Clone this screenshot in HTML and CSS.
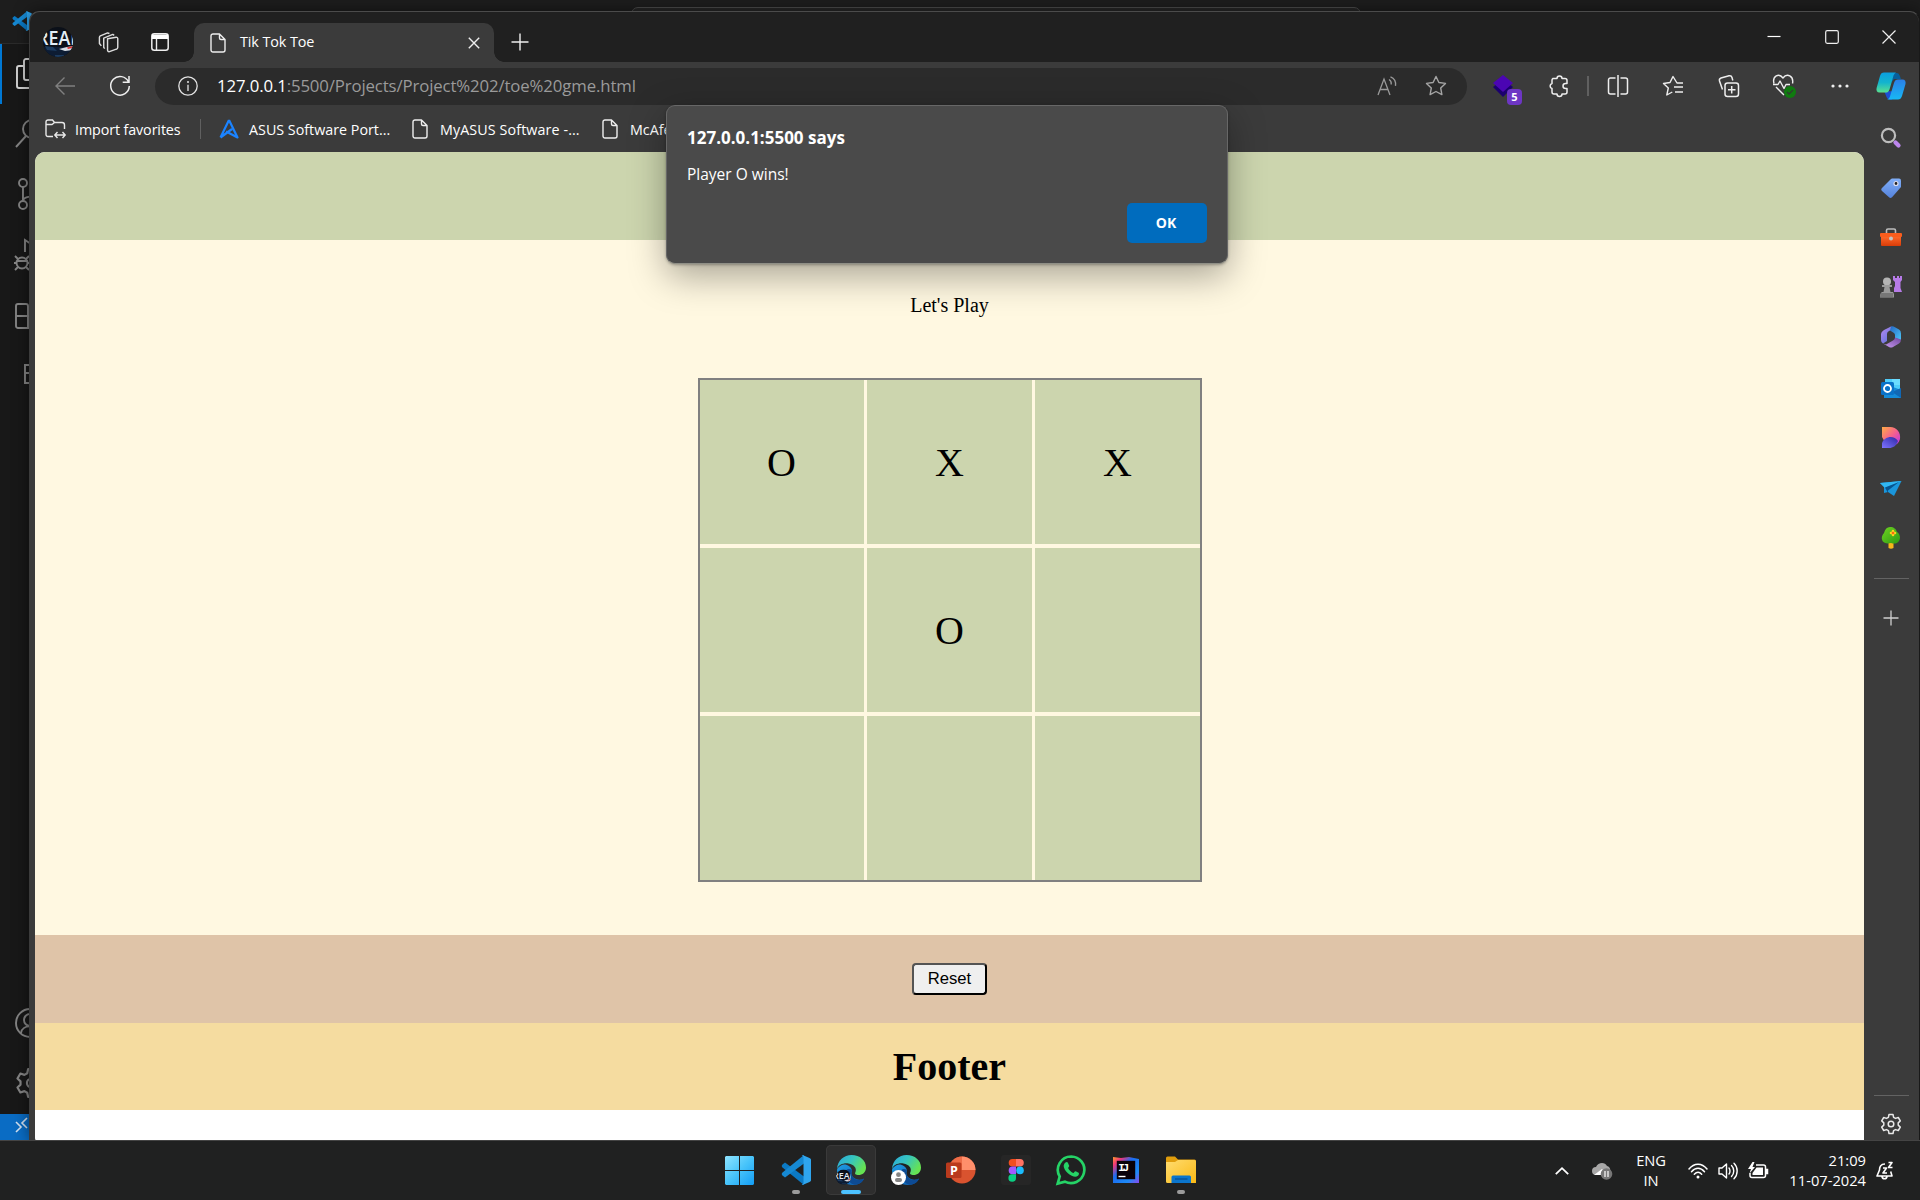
FILE: index.html
```html
<!DOCTYPE html>
<html lang="en">
<head>
<meta charset="utf-8">
<title>Tik Tok Toe</title>
<link rel="stylesheet" href="styles.css">
</head>
<body>
<svg class="defs" width="0" height="0" aria-hidden="true">
  <defs>
    <linearGradient id="gEdgeTop" x1="0" y1="0" x2="1" y2=".5"><stop offset="0" stop-color="#2aa7dc"/><stop offset=".5" stop-color="#36c5c0"/><stop offset="1" stop-color="#66e352"/></linearGradient>
    <linearGradient id="gEdgeLow" x1="0" y1="0" x2="1" y2="1"><stop offset="0" stop-color="#1f9ee6"/><stop offset="1" stop-color="#0c56a8"/></linearGradient>
    <linearGradient id="gWin" x1="0" y1="0" x2="1" y2="1"><stop offset="0" stop-color="#8fe4ff"/><stop offset=".5" stop-color="#48c4fa"/><stop offset="1" stop-color="#139df5"/></linearGradient>
    <linearGradient id="gCopA" x1="0" y1="0" x2="0" y2="1"><stop offset="0" stop-color="#0a9fe0"/><stop offset=".5" stop-color="#13b4ce"/><stop offset="1" stop-color="#5ae08f"/></linearGradient>
    <linearGradient id="gCopB" x1="0" y1="0" x2="0" y2="1"><stop offset="0" stop-color="#2b7fe8"/><stop offset="1" stop-color="#17b8f5"/></linearGradient>
    <linearGradient id="gRed" x1="0" y1="0" x2="0" y2="1"><stop offset="0" stop-color="#ff6b2b"/><stop offset="1" stop-color="#d93c08"/></linearGradient>
    <linearGradient id="gTag" x1="0" y1="0" x2="0" y2="1"><stop offset="0" stop-color="#80aef8"/><stop offset="1" stop-color="#5583dc"/></linearGradient>
    <linearGradient id="gM1" x1="0" y1="0" x2="1" y2="1"><stop offset="0" stop-color="#b98af0"/><stop offset="1" stop-color="#4b6ed8"/></linearGradient>
    <linearGradient id="gM2" x1="0" y1="0" x2="1" y2="1"><stop offset="0" stop-color="#2468c4"/><stop offset="1" stop-color="#4cc6f6"/></linearGradient>
    <linearGradient id="gM3" x1="0" y1="1" x2="1" y2="0"><stop offset="0" stop-color="#c99af2"/><stop offset="1" stop-color="#71479f"/></linearGradient>
    <linearGradient id="gD1" x1="0" y1="0" x2="1" y2="1"><stop offset="0" stop-color="#ffab45"/><stop offset=".5" stop-color="#f5608e"/><stop offset="1" stop-color="#b22ff0"/></linearGradient>
    <linearGradient id="gD2" x1="0" y1="1" x2="1" y2="0"><stop offset="0" stop-color="#7e74ff"/><stop offset="1" stop-color="#2d27a5"/></linearGradient>
    <linearGradient id="gFold" x1="0" y1="0" x2="1" y2="1"><stop offset="0" stop-color="#ffdc70"/><stop offset="1" stop-color="#fab914"/></linearGradient>
    <linearGradient id="gIJ" x1="0" y1="0" x2="1" y2="1"><stop offset="0" stop-color="#ff9a2c"/><stop offset=".18" stop-color="#f2357a"/><stop offset=".4" stop-color="#1c6cf0"/><stop offset=".75" stop-color="#1d8af5"/><stop offset="1" stop-color="#8a48ee"/></linearGradient>
    <linearGradient id="gTree" x1="0" y1="0" x2="1" y2="1"><stop offset="0" stop-color="#6fd420"/><stop offset="1" stop-color="#2c9a14"/></linearGradient>
    <symbol id="doc" viewBox="0 0 16 20"><path d="M3 1h6.500L15 6.500V17a2 2 0 0 1-2 2H3a2 2 0 0 1-2-2V3a2 2 0 0 1 2-2zM9.500 1v4a1.500 1.500 0 0 0 1.500 1.500h4" fill="none" stroke="#eee" stroke-width="1.400" stroke-linejoin="round"/></symbol>
    <symbol id="edge" viewBox="0 0 30 30">
      <path d="M1 15C1 25 9 30 17 30C23 30 27 26.500 28 23.500C26 25 22.500 25 20 24C16 22.500 14.500 18.500 16 15.500C15 11 9 8 5 10.500C2.500 12 1 13.500 1 15z" fill="url(#gEdgeLow)"/>
      <path d="M10 16C9 23 14 29.500 19 29.700C23.500 29.500 27 26.500 28 23.500C24 26 19 25 17 22C15 19.500 15 17 16 15C13 13 10.500 14 10 16z" fill="#0d4b94"/>
      <path d="M1 14C1.500 5.500 8 0 15.500 0C24 0 30 5.500 30 12.500C30 18 25.500 20.500 21.500 20C19 19.600 18.500 18.500 19.500 17C21 13 18 9.500 12.500 8.500C7 7.800 2.500 10 1 14z" fill="url(#gEdgeTop)"/>
    </symbol>
    <symbol id="vscode" viewBox="0 0 30 30">
      <path d="M1.500 9.500L4 7.500L23 21.500V30L1.500 12.500C.5 11.500 .5 10.500 1.500 9.500z" fill="#0b79c4"/>
      <path d="M1.500 20.500L4 22.500L23 8.500V0L1.500 17.500C.5 18.500 .5 19.500 1.500 20.500z" fill="#1689d3"/>
      <path d="M21.500 0L28.500 3C29.500 3.500 30 4 30 5V25C30 26 29.500 26.500 28.500 27L21.500 30L20.500 29C21.500 29.500 22.500 29 22.500 27.500V2.500C22.500 1 21.500 .5 20.500 1z" fill="#2fa5ee"/>
    </symbol>
    <symbol id="gear" viewBox="0 0 22 22"><path d="M9 1.500h4l.6 2.800 1.900 1.100 2.800-.9 2 3.400-2.100 2v2.200l2.100 2-2 3.400-2.800-.9-1.900 1.100-.6 2.800H9l-.6-2.800-1.900-1.100-2.800.9-2-3.400 2.100-2V9.900l-2.100-2 2-3.400 2.800.9 1.900-1.100z" fill="none" stroke="currentColor" stroke-width="1.500" stroke-linejoin="round"/><circle cx="11" cy="11" r="2.800" fill="none" stroke="currentColor" stroke-width="1.500"/></symbol>
    <symbol id="avatar" viewBox="0 0 30 30">
      <clipPath id="avClip"><circle cx="15" cy="15" r="15"/></clipPath>
      <g clip-path="url(#avClip)"><rect width="30" height="30" fill="#0b1019"/><path d="M0 20h30v10H0z" fill="#0d1c33"/>
      <text x="-6" y="18" font-family="Open Sans, sans-serif" font-weight="600" font-size="19" fill="#e2edf5" textLength="43" lengthAdjust="spacingAndGlyphs">REAL</text>
      <path d="M16 22l8-2 6-1v4l-8 1z" fill="#d9dfe6"/><path d="M24 20.500l6-1.500v1.700l-5 1.300z" fill="#d33"/><path d="M2 19l8 1 4 4-10-1zM12 28h9v2h-9z" fill="#1b3a5e"/></g>
    </symbol>
  </defs>
</svg>

<main class="desktop">
  <section class="code-window">
    <div class="code-title"><svg class="code-logo" width="20" height="20"><use href="#vscode"/></svg></div>
    <div class="command-box"></div>
    <div class="activity">
      <div class="act act-active"><svg width="30" height="32" viewBox="0 0 30 32"><path d="M9 8H4a2 2 0 0 0-2 2v18a2 2 0 0 0 2 2h17M11 1h11l6 6v13a2 2 0 0 1-2 2H11a2 2 0 0 1-2-2V3a2 2 0 0 1 2-2z"/></svg></div>
      <div class="act"><svg width="30" height="30" viewBox="0 0 30 30"><circle cx="17" cy="10" r="9"/><path d="M11 17L1 28"/></svg></div>
      <div class="act"><svg width="30" height="32" viewBox="0 0 30 32"><circle cx="8" cy="5" r="4"/><circle cx="8" cy="27" r="4"/><circle cx="22" cy="12" r="4"/><path d="M8 9v14M8 23c0-6 12-3 13-7"/></svg></div>
      <div class="act act-run"><svg width="30" height="32" viewBox="0 0 30 32"><path d="M10 13V1l18 12-8 6"/><circle cx="7" cy="24" r="5.500"/><path d="M2 22h11M0 17l3 3M14 17l-3 3M-1 24h3M12 24h3M0 31l3-3M14 31l-3-3"/></svg></div>
      <div class="act act-ext"><svg width="30" height="30" viewBox="0 0 30 30"><path d="M3 2h8a2 2 0 0 1 2 2v22H3a2 2 0 0 1-2-2V4a2 2 0 0 1 2-2zM1 14h24v10a2 2 0 0 1-2 2H13"/></svg></div>
      <div class="act"><svg width="30" height="30" viewBox="0 0 30 30"><path d="M25 6H10v18h15M10 14h14"/></svg></div>
      <div class="act-gap"></div>
      <div class="act act-user"><svg width="30" height="30" viewBox="0 0 30 30"><circle cx="15" cy="15" r="14"/><circle cx="15" cy="12" r="6"/><path d="M6 25c1-9 17-9 18 0"/></svg></div>
      <div class="act"><svg width="32" height="32" viewBox="0 0 22 22"><use href="#gear"/></svg></div>
    </div>
    <div class="remote"><svg width="14" height="16" viewBox="0 0 14 16"><path d="M1 5l5 5-5 5M12 1L7 6l5 5" fill="none" stroke="#d5e3f2" stroke-width="1.600"/></svg></div>
  </section>

  <section class="browser">
    <header class="tabstrip">
      <span class="cell profile"><svg width="30" height="30"><use href="#avatar"/></svg></span>
      <span class="cell spaces"><svg width="21" height="21" viewBox="0 0 22 22" fill="none" stroke="#ddd" stroke-width="1.500" stroke-linejoin="round"><path d="M10 7l9-1.500a1.500 1.500 0 0 1 1.700 1.300v9.500a1.800 1.800 0 0 1-1.500 1.700L12 20.500a1.500 1.500 0 0 1-2-1.500zM7 17.500L6 16V6.500L15.500 2.500l1.500 1M3.500 14.500L1.500 12V5.500a2 2 0 0 1 1-1.500L10 1l2 .5"/></svg></span>
      <span class="cell vtabs"><svg width="18" height="18" viewBox="0 0 18 18"><rect x=".8" y=".8" width="16.400" height="16.400" rx="2.500" fill="none" stroke="#eee" stroke-width="1.500"/><path d="M1 1.500h16V6H1z" fill="#fff"/><path d="M5.500 6v11" stroke="#eee" stroke-width="1.400"/></svg></span>
      <div class="tab">
        <svg width="16" height="20"><use href="#doc"/></svg>
        <span class="tab-title">Tik Tok Toe</span>
        <svg class="tab-close" width="12" height="12" viewBox="0 0 12 12"><path d="M.8.8l10.400 10.400M11.200.8L.8 11.200" stroke="#eee" stroke-width="1.400"/></svg>
      </div>
      <span class="cell newtab"><svg width="18" height="18" viewBox="0 0 18 18"><path d="M9 .5v17M.5 9h17" stroke="#eee" stroke-width="1.400"/></svg></span>
      <div class="controls">
        <span><svg width="14" height="14" viewBox="0 0 14 14"><path d="M.5 6.500h13" stroke="#fff" stroke-width="1.200"/></svg></span>
        <span><svg width="14" height="14" viewBox="0 0 14 14"><rect x=".7" y=".7" width="12.600" height="12.600" rx="1.500" fill="none" stroke="#eee" stroke-width="1.200"/></svg></span>
        <span><svg width="14" height="14" viewBox="0 0 14 14"><path d="M.5.5l13 13M13.500.5l-13 13" stroke="#eee" stroke-width="1.200"/></svg></span>
      </div>
    </header>

    <nav class="toolbar">
      <span class="cell back"><svg width="20" height="18" viewBox="0 0 20 18" fill="none" stroke="#808080" stroke-width="1.400"><path d="M20 9H1M9.500.5L1 9l8.500 8.500"/></svg></span>
      <span class="cell reload"><svg width="22" height="22" viewBox="0 0 22 22" fill="none" stroke="#eee" stroke-width="1.500"><path d="M19.500 7A9.300 9.300 0 1 0 20.300 11M20 1v6.300h-6.300"/></svg></span>
      <div class="address">
        <svg width="20" height="20" viewBox="0 0 20 20"><circle cx="10" cy="10" r="9.200" fill="none" stroke="#e3e3e3" stroke-width="1.300"/><path d="M10 8.700V15" stroke="#e3e3e3" stroke-width="1.300"/><circle cx="10" cy="6" r="1" fill="#e3e3e3"/></svg>
        <span class="url"><b>127.0.0.1</b>:5500/Projects/Project%202/toe%20gme.html</span>
        <span class="cell aloud"><svg width="20" height="20" viewBox="0 0 20 20" fill="none" stroke="#9a9a9a" stroke-width="1.300"><path d="M1 19L7 3l6 16M3.300 13.500h7.600M12 3.500c1.800 1 2.500 3 2.200 5M13.500.8c4 1.500 5.500 5 5 9"/></svg></span>
        <span class="cell"><svg width="22" height="22" viewBox="0 0 22 22" fill="none" stroke="#a5a5a5" stroke-width="1.400" stroke-linejoin="round"><path d="M11 1.500l2.900 6 6.600.9-4.800 4.600 1.200 6.600-5.900-3.100-5.900 3.100 1.200-6.600L1.500 8.400l6.600-.9z"/></svg></span>
      </div>
      <div class="tools">
        <span class="ext"><svg width="22" height="24" viewBox="0 0 22 24"><path d="M1 13l10 10 10-10-4-3H5z" fill="#1b006f"/><path d="M11 1l10 8-10 9L1 9z" fill="#4b05b3"/></svg><i class="badge">5</i></span>
        <span class="puz"><svg width="22" height="22" viewBox="0 0 22 22" fill="none" stroke="#eee" stroke-width="1.500" stroke-linejoin="round"><path d="M5 3.500h4a2.500 2.500 0 0 1 5 0h3a2 2 0 0 1 2 2V8.500h-1.500a2.500 2.500 0 0 0 0 5H19V17a2 2 0 0 1-2 2h-3a2.500 2.500 0 0 1-5 0H6a2 2 0 0 1-2-2v-3.500a2.600 2.600 0 0 1 0-5V5.500a2 2 0 0 1 1-2z"/></svg></span>
        <span class="rule"></span>
        <span><svg width="22" height="22" viewBox="0 0 22 22" fill="none" stroke="#eee" stroke-width="1.500"><path d="M11 0v22M8.500 3H3.500a2 2 0 0 0-2 2v12a2 2 0 0 0 2 2h5M13.500 3h5a2 2 0 0 1 2 2v12a2 2 0 0 1-2 2h-5"/></svg></span>
        <span><svg width="22" height="22" viewBox="0 0 22 22" fill="none" stroke="#eee" stroke-width="1.400" stroke-linejoin="round"><path d="M21 8h-6l-4-6.500-3 6-6.500 1 4.800 4.500-1.500 7 5.500-3M12 12h9M13 17h8"/></svg></span>
        <span><svg width="22" height="22" viewBox="0 0 22 22" fill="none" stroke="#eee" stroke-width="1.500"><rect x="7" y="8" width="13.500" height="13.500" rx="2.500"/><path d="M13.700 11v7.500M10 14.800h7.500M4.500 14.500L1.500 6A2.500 2.500 0 0 1 3 3l8-2.200A2.500 2.500 0 0 1 14 2.500l.8 3"/></svg></span>
        <span><svg width="24" height="24" viewBox="0 0 24 24" fill="none" stroke="#eee" stroke-width="1.400" stroke-linejoin="round"><path d="M2 9.500C0 2 7-1.500 11 4c4-5.500 11-2 9.500 5.500M1 10.500h5l2-3.500 4 7.500 2-4h4M4 13l8 8"/><circle cx="18" cy="18" r="6" fill="#0f7b0f" stroke="none"/><path d="M15 18l2 2 4-4" stroke="#303c30"/></svg></span>
        <span><svg width="18" height="6" viewBox="0 0 18 6" fill="#eee"><circle cx="2" cy="3" r="1.600"/><circle cx="9" cy="3" r="1.600"/><circle cx="16" cy="3" r="1.600"/></svg></span>
      </div>
      <span class="cell copilot"><svg width="30" height="28" viewBox="0 0 30 28"><path d="M18 1h3c2 0 3 3 4 6h-7l-3 4z" fill="#075f9c"/><path d="M8 19l3 7c1 1.500 3 2 5 1.500l4-8z" fill="#1c4fd3"/><path d="M8 .5h12c-2 1-2.500 3-3 5l-3.500 12c-1 2.500-2 3-4 3H3.500C1 20.500 0 18.500.6 16L4 4C4.700 1.500 6 .5 8 .5z" fill="url(#gCopA)"/><path d="M22 27.500H11c2-.5 2.700-2 3.400-4.500L18 11c.7-2.500 2-3.500 4-3.500h4.500c2.500 0 3.500 2 3 4.500L26 24c-.8 2.500-2 3.500-4 3.500z" fill="url(#gCopB)"/></svg></span>
    </nav>

    <div class="content">
      <div class="main-col">
        <div class="bookmarks">
          <svg width="21" height="20" viewBox="0 0 21 20" fill="none" stroke="#e8e8e8" stroke-width="1.400"><path d="M8 17.500H3a2 2 0 0 1-2-2V3a2 2 0 0 1 2-2h4.500l2 2.500H17a2.500 2.500 0 0 1 2.500 2.500v4M1 5.500h6l2.500-2M10 16h10M12.500 13L9.800 16l2.700 3M17.500 13l2.700 3-2.700 3"/></svg>
          <span class="bm bm-import">Import favorites</span>
          <span class="bm-rule"></span>
          <svg class="asus" width="20" height="20" viewBox="0 0 20 20" fill="none" stroke="#1b83ff" stroke-width="2.200" stroke-linejoin="round"><path d="M10 1L1.500 18.500M10 1l8.500 17.500L10 14 7 12.500M1.500 18.500L13 10"/></svg>
          <span class="bm bm-asus">ASUS Software Port...</span>
          <svg width="16" height="20"><use href="#doc"/></svg>
          <span class="bm bm-my">MyASUS Software -...</span>
          <svg width="16" height="20"><use href="#doc"/></svg>
          <span class="bm bm-mc">McAfee</span>
        </div>
        <div class="page">
          <div class="page-head"></div>
          <div class="play">
            <p>Let's Play</p>
            <div class="board">
              <div>O</div><div>X</div><div>X</div>
              <div></div><div>O</div><div></div>
              <div></div><div></div><div></div>
            </div>
          </div>
          <div class="reset-row"><button class="reset">Reset</button></div>
          <h1 class="footer">Footer</h1>
        </div>
      </div>
      <aside class="sidebar">
        <span><svg width="22" height="22" viewBox="0 0 22 22" fill="none"><circle cx="8.500" cy="8.500" r="6.600" stroke="#bdbdbd" stroke-width="2.200"/><path d="M15.500 15.500l3 3" stroke="#bd86ee" stroke-width="4.200" stroke-linecap="round"/></svg></span>
        <span><svg width="22" height="22" viewBox="0 0 22 22"><path d="M12 1.500h7a2 2 0 0 1 2 2V10L12 20.300c-1 .8-2 .8-3 0L2 14c-1-1-1-2 0-3L11 2z" fill="url(#gTag)"/><circle cx="16" cy="6.500" r="2" fill="#222" stroke="#dde" stroke-width="1.200"/></svg></span>
        <span><svg width="22" height="18" viewBox="0 0 22 18"><path d="M6.500 5V2.500Q6.500 1 8 1h6q1.500 0 1.500 1.500V5" fill="none" stroke="#bdbdbd" stroke-width="1.600"/><rect x="1" y="8" width="20" height="10" rx="1" fill="url(#gRed)"/><rect x="0" y="5" width="22" height="4" rx="1" fill="#fa5d1d"/><circle cx="11" cy="10.500" r="2" fill="#c4c4c4"/></svg></span>
        <span><svg width="22" height="22" viewBox="0 0 22 22"><path d="M13 0h2v2h2V0h2v2h1V0h2v4l-1.500 2v6l1.500 4h-8V12l1-2V6l-2-2z" fill="#b77be8"/><circle cx="7" cy="5.500" r="4" fill="#b4b4b4"/><path d="M2 9h10v2H9.500l1 5H13q1.500 1.500 1 5.500H0Q0 17 2 16h1.500l1-5H2z" fill="#9a9a9a"/><path d="M1 17h12v4H0z" fill="#777"/></svg></span>
        <span><svg width="20" height="22" viewBox="0 0 20 22"><path d="M10 .5L3 4Q0 6 0 8v6q0 2 2 3.500l4-2.500V8q0-2 2-3l5-2.500z" fill="url(#gM1)"/><path d="M10 .5q2-.5 4 .7l4 2.300q2 1 2 4V14l-6-2V9q0-1-1-2L9 4.500z" fill="url(#gM2)"/><path d="M2 17.500L8 21q2 1.200 4 0l6-3.500q2-1.500 2-4l-6-2q0 2-2 3L5 18.500z" fill="url(#gM3)"/></svg></span>
        <span><svg width="20" height="20" viewBox="0 0 20 20"><path d="M4 1h14q1 0 1 1v11H4z" fill="#4fcdfa"/><path d="M11 1h8v6h-8z" fill="#6bdcff"/><path d="M3 9h9l8 3v8H3z" fill="#158bd8"/><path d="M20 10v10L11 14z" fill="#1168b5"/><rect x="0" y="4" width="13" height="13" rx="1.500" fill="#0a72c8"/><circle cx="6.500" cy="10.500" r="3.500" fill="none" stroke="#fff" stroke-width="1.800"/></svg></span>
        <span><svg width="20" height="21" viewBox="0 0 20 21"><path d="M1 0h8C16 0 20 6 19 12c-1 4-4 6-7 7l4-5-8-3-5 2.500L1 10z" fill="url(#gD1)"/><path d="M1 21V16c3-7 12-8 16-2-2 5-5 7-9 7z" fill="url(#gD2)"/></svg></span>
        <span><svg width="22" height="16" viewBox="0 0 22 16"><path d="M0 3L21.500 1 14 16 8 12 4 13 4 7z" fill="#1a96dc"/><path d="M0 3L21.500 1 5 8z" fill="#31b7f3"/><path d="M5 7.500L19 2 8 10.500V13z" fill="#07548f"/></svg></span>
        <span><svg width="20" height="22" viewBox="0 0 20 22"><path d="M7.500 15h5v6q-2.500 1.500-5 0z" fill="#f6b71a"/><path d="M9 0c4 0 6 2 7 5 3 2 4 6 2 9-2 3-5 3-8 2-4 1-7 0-8.500-2C0 11 1 8 3 6 4 2 6 0 9 0z" fill="url(#gTree)"/><path d="M12 4v4M10 6h4" stroke="#ffd21d" stroke-width="2.600" stroke-linecap="round"/><circle cx="12" cy="6" r="1.300" fill="#f26a15"/></svg></span>
        <i class="side-rule"></i>
        <span class="side-plus"><svg width="16" height="16" viewBox="0 0 16 16"><path d="M8 .5v15M.5 8h15" stroke="#d0d0d0" stroke-width="1.300"/></svg></span>
        <i class="side-rule side-rule-end"></i>
        <span class="side-gear"><svg width="22" height="22"><use href="#gear"/></svg></span>
      </aside>
    </div>

    <div class="dialog">
      <h2>127.0.0.1:5500 says</h2>
      <p>Player O wins!</p>
      <button>OK</button>
    </div>
  </section>

  <footer class="taskbar">
    <div class="apps">
      <span class="start"><svg width="29" height="29" viewBox="0 0 29 29"><path d="M1 0h13v14H0V1zM15 0h13l1 1v13H15zM0 15h14v14H1l-1-1zM15 15h14v13l-1 1H15z" fill="url(#gWin)"/></svg></span>
      <span class="open"><svg width="30" height="30"><use href="#vscode"/></svg></span>
      <span class="current"><svg width="30" height="30" viewBox="0 0 30 30"><use href="#edge"/><svg x="0" y="14.500" width="15" height="15" viewBox="0 0 30 30"><use href="#avatar"/></svg></svg></span>
      <span><svg width="30" height="30" viewBox="0 0 30 30"><use href="#edge"/><circle cx="7.500" cy="22.500" r="7.500" fill="#fff"/><circle cx="7.500" cy="19.700" r="2.400" fill="#858585"/><rect x="4" y="23" width="7" height="4" rx="2" fill="#858585"/></svg></span>
      <span><svg width="30" height="30" viewBox="0 0 30 30"><circle cx="16" cy="15" r="13.500" fill="#d9532f"/><path d="M16 1.500A13.500 13.500 0 0 1 29.500 15H16z" fill="#ff8f6b"/><path d="M16 1.500A13.500 13.500 0 0 0 2.500 15H16z" fill="#ed6c47"/><rect x="0" y="7.500" width="15.500" height="15.500" rx="1.500" fill="#b93a1d"/><text x="4" y="20" font-family="Open Sans, sans-serif" font-size="12.500" font-weight="700" fill="#fff">P</text></svg></span>
      <span><svg width="30" height="30" viewBox="0 0 30 30"><rect width="30" height="30" rx="3" fill="#262626"/><path d="M15 4h-3.500a3.800 3.800 0 0 0 0 7.600H15z" fill="#f24e1e"/><path d="M15 4h4a3.800 3.800 0 0 1 0 7.600h-4z" fill="#ff7262"/><path d="M15 11.600h-3.500a3.800 3.800 0 0 0 0 7.600H15z" fill="#a259ff"/><circle cx="19" cy="15.400" r="3.800" fill="#1abcfe"/><path d="M15 19.200h-3.500a3.800 3.800 0 1 0 3.500 3.800z" fill="#0acf83"/></svg></span>
      <span><svg width="30" height="30" viewBox="0 0 30 30"><path d="M15.200 1.500a13.300 13.300 0 0 0-11.500 20L1.700 28.500l7.200-1.900A13.300 13.300 0 1 0 15.200 1.500z" fill="none" stroke="#25d366" stroke-width="2.700"/><path d="M9.500 7.500c1-1 2-.5 2.400.3l1.300 3c.2.800-1.300 1.800-1 2.400 1 2 3 4 5 4.700.8.200 1.500-1.900 2.400-1.600l3 1.500c.7.500.3 2.200-.6 3-2.500 2-6 .5-8.500-1.200-2.500-1.800-5-4.600-5.700-7.600-.4-2 .5-3.500 1.700-4.500z" fill="#25d366"/></svg></span>
      <span><svg width="26" height="26" viewBox="0 0 26 26"><path d="M0 0l8 1 8-1 10 2v24H0z" fill="url(#gIJ)"/><rect x="3.800" y="3.800" width="18.400" height="18.400" fill="#090109"/><text x="5.200" y="13.500" font-family="Liberation Mono, monospace" font-size="11" font-weight="700" fill="#fff" textLength="11">IJ</text><path d="M5.500 19.500h7" stroke="#fff" stroke-width="1.400"/></svg></span>
      <span class="open"><svg width="30" height="28" viewBox="0 0 30 28"><path d="M0 2q0-1.500 1.500-1.500H9L12 3.500h16.500Q30 3.500 30 5v5H0z" fill="#e09d0c"/><path d="M0 6h9l3-2h16.500Q30 4 30 5.500V27H1.500Q0 27 0 25.500z" fill="url(#gFold)"/><path d="M5.500 27v-6q0-1.500 1.500-1.500h16.500q1.500 0 1.500 1.500v6z" fill="#0b75cc"/><path d="M9 23h12.500" stroke="#0a4f94" stroke-width="1.300"/></svg></span>
    </div>
    <div class="tray">
      <svg class="t-chev" width="14" height="8" viewBox="0 0 14 8"><path d="M.8 7.200L7 1.200l6.200 6" fill="none" stroke="#fff" stroke-width="1.800"/></svg>
      <svg class="t-cloud" width="21" height="18" viewBox="0 0 21 18"><path d="M4 13a4 4 0 0 1 0-8C6 0 13-.5 15 4c4 0 5 9 0 9z" fill="#a8a8a8"/><path d="M2 13l8-6 6 6z" fill="#fff"/><circle cx="14.500" cy="12" r="5.800" fill="#777"/><path d="M13 9v6M16 9v6" stroke="#fff" stroke-width="1.200"/></svg>
      <div class="lang"><span>ENG</span><span>IN</span></div>
      <svg class="t-wifi" width="20" height="16" viewBox="0 0 20 16" fill="none" stroke="#fff" stroke-width="1.500" stroke-linecap="round"><path d="M1 6c5-6.500 13-6.500 18 0M3.500 8.800c4-4.600 9-4.600 13 0M6.300 11.300c2.500-2.700 5-2.700 7.400 0"/><circle cx="10" cy="14" r="1.500" fill="#fff" stroke="none"/></svg>
      <svg class="t-vol" width="20" height="18" viewBox="0 0 20 18" fill="none" stroke="#fff" stroke-width="1.400" stroke-linejoin="round" stroke-linecap="round"><path d="M1 6h3l4.500-4v14L4 12H1zM11 6c1.300 1.500 1.300 4.500 0 6M13.500 3.500c3 3 3 8 0 11M16 1.300c4.200 4 4.200 11.400 0 15.400"/></svg>
      <svg class="t-bat" width="21" height="17" viewBox="0 0 21 17"><path d="M8 3h7.500a2 2 0 0 1 2 2v8.500a2 2 0 0 1-2 2H4a2 2 0 0 1-2-2V11M18.500 7.500h1v4h-1z" fill="none" stroke="#fff" stroke-width="1.500"/><path d="M8.500 5.500H15v7.500H4.500V11z" fill="#fff"/><path d="M4.500 0L0 7h3L1.500 11.500 7 5H4.500L6.500 0z" fill="#fff"/></svg>
      <div class="clock"><span>21:09</span><span>11-07-2024</span></div>
      <svg class="t-bell" width="18" height="19" viewBox="0 0 18 19" fill="none" stroke="#fff" stroke-width="1.600" stroke-linejoin="round"><path d="M9 3C4.500 3 3.500 6 3.500 9L1 15h15l-1.300-4.500M6 15.500c.5 3 4.500 3 5 0M7 7h3.500L7 12h4M12.500 1.500H16l-3.500 5h4"/></svg>
    </div>
  </footer>
</main>
</body>
</html>
```
FILE: styles.css
```css
* { box-sizing: border-box; }
html, body { margin: 0; width: 1920px; height: 1200px; overflow: hidden; }
body { font-family: "Open Sans", "Noto Sans", sans-serif; color: #fff; background: #1b1b1b; }
svg { display: block; flex: none; overflow: visible; }
.defs { position: absolute; }
.desktop { position: relative; width: 1920px; height: 1200px; overflow: hidden; }
.cell { display: flex; align-items: center; justify-content: center; flex: none; }

/* Editor window showing behind the browser */
.code-window { position: absolute; left: 0; top: 0; width: 1920px; height: 1140px; display: flex; flex-direction: column; background: #181818; }
.code-title { height: 44px; background: #1d1d1d; border-bottom: 1px solid #2b2b2b; padding: 11px 0 0 12px; flex: none; }
.command-box { position: absolute; left: 631px; top: 7px; width: 730px; height: 28px; border: 1px solid #4a4a4a; border-radius: 7px; background: #252525; }
.activity { flex: 1; width: 60px; display: flex; flex-direction: column; }
.act { height: 60px; padding-left: 15px; display: flex; align-items: center; color: #858585; flex: none; }
.act svg { fill: none; stroke: #858585; stroke-width: 1.900; }
.act-active { border-left: 2px solid #0078d4; padding-left: 13px; }
.act-active svg { stroke: #d7d7d7; }
.act-run { padding-top: 2px; }
.act-ext { padding-top: 6px; }
.act-gap { flex: 1; }
.act-user { padding-bottom: 2px; }
.activity .act:last-child { padding-bottom: 2px; }
.remote { height: 26px; width: 60px; background: #0a6cc4; padding: 3px 0 0 15px; flex: none; }

/* Browser window */
.browser { position: absolute; left: 29px; top: 11px; width: 1891px; height: 1130px; display: flex; flex-direction: column; background: #3b3b3b; border-top: 1px solid #4b4b4b; border-left: 1px solid #3b3b3b; border-right: 1px solid #191919; border-radius: 10px 10px 0 0; box-shadow: 0 0 16px rgba(0,0,0,.5); }
.tabstrip { height: 50px; display: flex; align-items: flex-end; background: #202020; border-radius: 10px 10px 0 0; flex: none; }
.tabstrip .cell { height: 40px; }
.profile { width: 55px; }
.spaces { width: 46px; }
.vtabs { width: 58px; }
.tab { position: relative; width: 300px; height: 39px; margin-left: 5px; padding: 0 14px 0 16px; display: flex; align-items: center; background: #3b3b3b; border-radius: 10px 10px 0 0; }
.tab::before, .tab::after { content: ""; position: absolute; bottom: 0; width: 10px; height: 10px; }
.tab::before { left: -10px; background: radial-gradient(circle at 0 0, #202020 9.500px, #3b3b3b 10px); }
.tab::after { right: -10px; background: radial-gradient(circle at 100% 0, #202020 9.500px, #3b3b3b 10px); }
.tab-title { margin-left: 14px; padding-bottom: 2px; font-size: 14.400px; letter-spacing: -.1px; }
.tab-close { margin-left: auto; }
.newtab { width: 52px; }
.controls { margin-left: auto; margin-right: 1px; display: flex; align-self: flex-start; height: 49px; }
.controls span { width: 57.500px; display: flex; align-items: center; justify-content: center; }
.toolbar { height: 48px; display: flex; align-items: center; flex: none; }
.back { width: 69px; }
.reload { width: 42px; }
.address { width: 1312px; height: 37px; margin-left: 14px; padding: 0 7px 0 23px; display: flex; align-items: center; background: #2b2b2b; border-radius: 19px; }
.url { flex: 1; margin-left: 19px; padding-bottom: 1px; font-size: 16.800px; color: #9a9a9a; letter-spacing: -.13px; white-space: pre; }
.url b { font-weight: 400; color: #fff; }
.address .cell { width: 49px; }
.tools { display: flex; align-items: center; margin-left: 8px; }
.tools span { width: 55.400px; height: 37px; display: flex; align-items: center; justify-content: center; }
.tools .ext { position: relative; width: 56px; }
.badge { position: absolute; left: 32px; top: 21px; width: 15px; height: 16px; border-radius: 4px; background: #6d36c4; font: 700 11px/16px "Open Sans", sans-serif; text-align: center; }
.tools .rule { width: 2px; height: 20px; margin: 0 1px; background: #606060; }
.copilot { width: 47px; }

.content { flex: 1; display: flex; min-height: 0; }
.main-col { width: 1834px; padding-left: 5px; display: flex; flex-direction: column; flex: none; }
.bookmarks { height: 42px; padding: 0 0 2px 10px; margin-top: -1px; margin-bottom: 1px; display: flex; align-items: center; flex: none; }
.bm { font-size: 14.300px; white-space: nowrap; flex: none; }
.bm-import { width: 125px; margin-left: 9px; letter-spacing: -.1px; }
.bm-rule { width: 1px; height: 20px; background: #606060; }
.asus { margin-left: 18px; }
.bm-asus { width: 163px; margin-left: 10px; }
.bm-my { width: 162px; margin-left: 12px; letter-spacing: .1px; }
.bm-mc { margin-left: 12px; }

/* The game page */
.page { flex: 1; background: #fff; border-radius: 10px 10px 0 3px; overflow: hidden; color: #000; font-family: "Liberation Serif", "Times New Roman", serif; font-size: 20px; text-align: center; }
.page-head { height: 88px; background: #ccd5ae; }
.play { height: 695px; background: #fff8e1; display: flex; flex-direction: column; align-items: center; }
.play p { margin: 53px 0 62px; line-height: 24px; height: 23px; }
.board { width: 504px; height: 504px; border: 2px solid #808080; display: grid; grid-template-columns: 164px 165px 165px; grid-template-rows: repeat(3, 164px); gap: 4px 3px; font-size: 40px; }
.board div { display: flex; align-items: center; justify-content: center; background: #ccd5ae; }
.board div:not(:nth-child(3n+1)) { padding-left: 1px; }
.reset-row { height: 88px; display: flex; align-items: center; justify-content: center; background: #dfc4a8; }
.reset { width: 75px; height: 32px; padding: 0; border: 2px outset #000; border-radius: 4px; background: #efefef; color: #000; font: 16.670px "Liberation Sans", Arial, sans-serif; }
.footer { height: 87px; margin: 0; font-size: 40px; line-height: 88px; background: #f5dca0; }

.sidebar { width: 54px; padding-top: 3px; display: flex; flex-direction: column; align-items: center; flex: none; }
.sidebar span { height: 50.100px; display: flex; align-items: center; justify-content: center; flex: none; color: #e8e8e8; }
.sidebar span:first-child { height: 49.100px; }
.sidebar span:nth-child(2) { padding-top: 2px; }
.side-rule { width: 35px; height: 1px; margin-top: 15px; background: #636363; flex: none; }
.sidebar .side-plus { height: 78px; }
.side-rule-end { margin-top: auto; }
.sidebar .side-gear { height: 45px; padding-top: 10px; }

.dialog { position: absolute; left: 636px; top: 93px; width: 562px; height: 159px; padding: 20px 20px 20px 20px; display: flex; flex-direction: column; background: #4a4a4a; border: 1px solid #676767; border-bottom-color: #8f8f86; border-radius: 9px; box-shadow: 0 12px 36px rgba(0,0,0,.34), 0 1px 3px rgba(0,0,0,.3); }
.dialog h2 { margin: 0; font-size: 17px; line-height: 24px; font-weight: 700; }
.dialog p { margin: 14px 0 0; font-size: 15.500px; line-height: 20px; }
.dialog button { width: 80px; height: 40px; margin-left: auto; margin-top: 19px; padding: 0 2px 2px 0; border: 0; border-radius: 5px; background: #006cbe; color: #fff; font: 700 14px "Open Sans", sans-serif; flex: none; }

.taskbar { position: absolute; left: 0; top: 1140px; width: 1920px; height: 60px; display: flex; background: #202121; border-top: 1px solid #444; }
.apps { display: flex; margin-left: 714px; padding-top: 4px; gap: 5px; }
.apps span { position: relative; width: 50px; height: 50px; display: flex; align-items: center; justify-content: center; }
.apps .start { width: 51px; padding-right: 1px; margin-right: 1px; }
.current { background: #2e2e2e; border-radius: 5px; box-shadow: inset 0 0 0 1px #3a3a3a; }
.open::after, .current::after { content: ""; position: absolute; bottom: 1px; height: 4px; border-radius: 2px; width: 8px; background: #9b9b9b; }
.current::after { width: 20px; background: #4cc2ff; }
.tray { margin-left: auto; padding-right: 26px; display: flex; align-items: center; font-size: 14.700px; line-height: 20px; }
.lang, .clock { display: flex; flex-direction: column; padding-bottom: 1px; }
.t-cloud { margin-left: 23px; }
.lang { width: 32px; margin-left: 22px; text-align: center; align-items: center; letter-spacing: -.2px; }
.t-wifi { margin-left: 21px; }
.t-vol { margin-left: 10px; }
.t-bat { margin-left: 10px; }
.clock { width: 88px; margin-left: 9px; align-items: flex-end; }
.t-bell { margin-left: 10px; }
```
